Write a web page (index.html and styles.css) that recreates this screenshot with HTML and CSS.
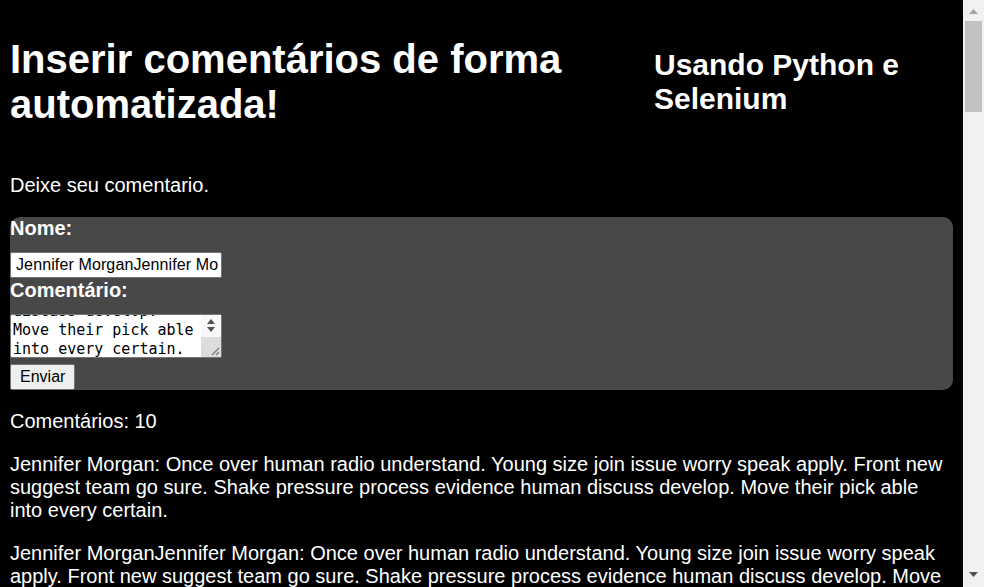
FILE: index.html
```html
<!DOCTYPE html>
<html lang="pt-BR">
<head>
<meta charset="utf-8">
<title>Inserir comentários de forma automatizada!</title>
<link rel="stylesheet" href="styles.css">
</head>
<body>
<header class="page-header">
  <h1 class="main-title">Inserir comentários de forma automatizada!</h1>
  <h2 class="sub-title">Usando Python e Selenium</h2>
</header>

<p class="intro">Deixe seu comentario.</p>

<form class="comment-form" onsubmit="return false;">
  <label class="field-label" for="nome">Nome:</label>
  <input id="nome" class="name-input" type="text" value="Jennifer MorganJennifer MorganJennifer MorganJennifer MorganJennifer MorganJennifer MorganJennifer MorganJennifer MorganJennifer MorganJennifer Morgan">
  <label class="field-label field-label-second" for="comentario">Comentário:</label>
  <div class="ta-wrap">
    <textarea id="comentario" class="comment-input">Once over human radio understand. Young size join issue worry speak apply. Front new suggest team go sure. Shake pressure process evidence human discuss develop. Move their pick able into every certain.Once over human radio understand. Young size join issue worry speak apply. Front new suggest team go sure. Shake pressure process evidence human discuss develop. Move their pick able into every certain.</textarea>
    <div class="ta-bar" aria-hidden="true">
      <div class="ta-arrows">
        <svg class="ta-arrow" width="8" height="5" viewBox="0 0 8 5"><polygon points="4,0 8,5 0,5" fill="#505050"/></svg>
        <svg class="ta-arrow" width="8" height="5" viewBox="0 0 8 5"><polygon points="0,0 8,0 4,5" fill="#505050"/></svg>
      </div>
      <div class="ta-corner">
        <svg width="20" height="20" viewBox="0 0 20 20"><path d="M11 18 L18 11 M15 18 L18 15" stroke="#7a7a7a" stroke-width="1.2" fill="none"/></svg>
      </div>
    </div>
  </div>
  <button class="send-btn" type="submit">Enviar</button>
</form>

<p class="count">Comentários: 10</p>

<div id="comments" class="comments">
  <p class="comment">Jennifer Morgan: Once over human radio understand. Young size join issue worry speak apply. Front new suggest team go sure. Shake pressure process evidence human discuss develop. Move their pick able into every certain.</p>
</div>

<div class="page-scrollbar" aria-hidden="true">
  <svg class="sb-up" width="9" height="5" viewBox="0 0 9 5"><polygon points="4.5,0 9,5 0,5" fill="#a3a3a3"/></svg>
  <div class="sb-thumb"></div>
  <svg class="sb-down" width="9" height="5" viewBox="0 0 9 5"><polygon points="0,0 9,0 4.5,5" fill="#505050"/></svg>
</div>

<script src="script.js"></script>
</body>
</html>
```

FILE: styles.css
```css
html {
  background: #000;
  scrollbar-width: none;
}

body {
  margin: 10px 31px 10px 10px;
  color: #fff;
  background: #000;
  font-family: "Liberation Sans", Arial, sans-serif;
  font-size: 20px;
}

.page-header {
  display: flex;
  align-items: center;
}

.main-title {
  flex: 1 1 auto;
  margin: 0.67em 0;
  font-size: 40px;
  font-weight: bold;
}

.sub-title {
  flex: 0 0 299px;
  margin: 0.83em 0;
  font-size: 30px;
  font-weight: bold;
}

.intro,
.count,
.comment {
  margin: 20px 0;
  line-height: 23px;
}

.comment-form {
  display: flex;
  flex-direction: column;
  align-items: flex-start;
  background: #484848;
  border-radius: 10px;
}

.field-label {
  display: block;
  font-weight: bold;
  line-height: 23px;
}

.field-label-second {
  margin-top: 1px;
}

.name-input {
  box-sizing: border-box;
  width: 212px;
  height: 26px;
  margin: 12px 0 0;
  padding: 1px 3px 1px 5px;
  border: 1px solid #767676;
  border-radius: 2px;
  background: #fff;
  color: #000;
  font-family: "Liberation Sans", Arial, sans-serif;
  font-size: 16px;
  letter-spacing: 0.12px;
}

.ta-wrap {
  position: relative;
  margin-top: 12px;
  width: 212px;
  height: 44px;
}

.comment-input {
  display: block;
  box-sizing: border-box;
  width: 212px;
  height: 44px;
  margin: 0;
  padding: 2px 22px 2px 2px;
  border: 1px solid #767676;
  border-radius: 2px;
  background: #fff;
  color: #000;
  font-family: "DejaVu Sans Mono", "Liberation Mono", monospace;
  font-size: 15px;
  line-height: 19px;
  resize: none;
  scrollbar-width: none;
}

.ta-bar {
  position: absolute;
  top: 1px;
  right: 1px;
  bottom: 1px;
  width: 20px;
  display: flex;
  flex-direction: column;
  background: #f8f8f8;
}

.ta-arrows {
  flex: 1;
  display: flex;
  flex-direction: column;
  align-items: center;
  justify-content: center;
  gap: 3px;
}

.ta-arrow {
  display: block;
}

.ta-corner {
  height: 20px;
  background: #dcdcdc;
}

.ta-corner svg {
  display: block;
}

.send-btn {
  box-sizing: border-box;
  height: 26px;
  margin: 6px 0 0;
  padding: 0 9px;
  border: 1px solid #767676;
  border-radius: 2px;
  background: #efefef;
  color: #000;
  font-family: "Liberation Sans", Arial, sans-serif;
  font-size: 16px;
}

.page-scrollbar {
  position: fixed;
  top: 0;
  right: 0;
  width: 21px;
  height: 100vh;
  background: #f1f1f1;
}

.sb-up {
  position: absolute;
  top: 9px;
  left: 6px;
}

.sb-thumb {
  position: absolute;
  top: 21px;
  left: 2px;
  width: 17px;
  height: 91px;
  background: #c1c1c1;
}

.sb-down {
  position: absolute;
  bottom: 10px;
  left: 6px;
}
```

FILE: script.js
```js
(function () {
  var text = "Once over human radio understand. Young size join issue worry speak apply. Front new suggest team go sure. Shake pressure process evidence human discuss develop. Move their pick able into every certain.";
  var name = "Jennifer Morgan";

  var list = document.getElementById("comments");
  for (var i = 2; i <= 10; i++) {
    var p = document.createElement("p");
    p.className = "comment";
    p.textContent = name.repeat(i) + ": " + text.repeat(i);
    list.appendChild(p);
  }

  var ta = document.getElementById("comentario");
  ta.value = text.repeat(10);
  ta.scrollTop = Math.max(0, ta.scrollHeight - ta.clientHeight - 4);
})();
```
